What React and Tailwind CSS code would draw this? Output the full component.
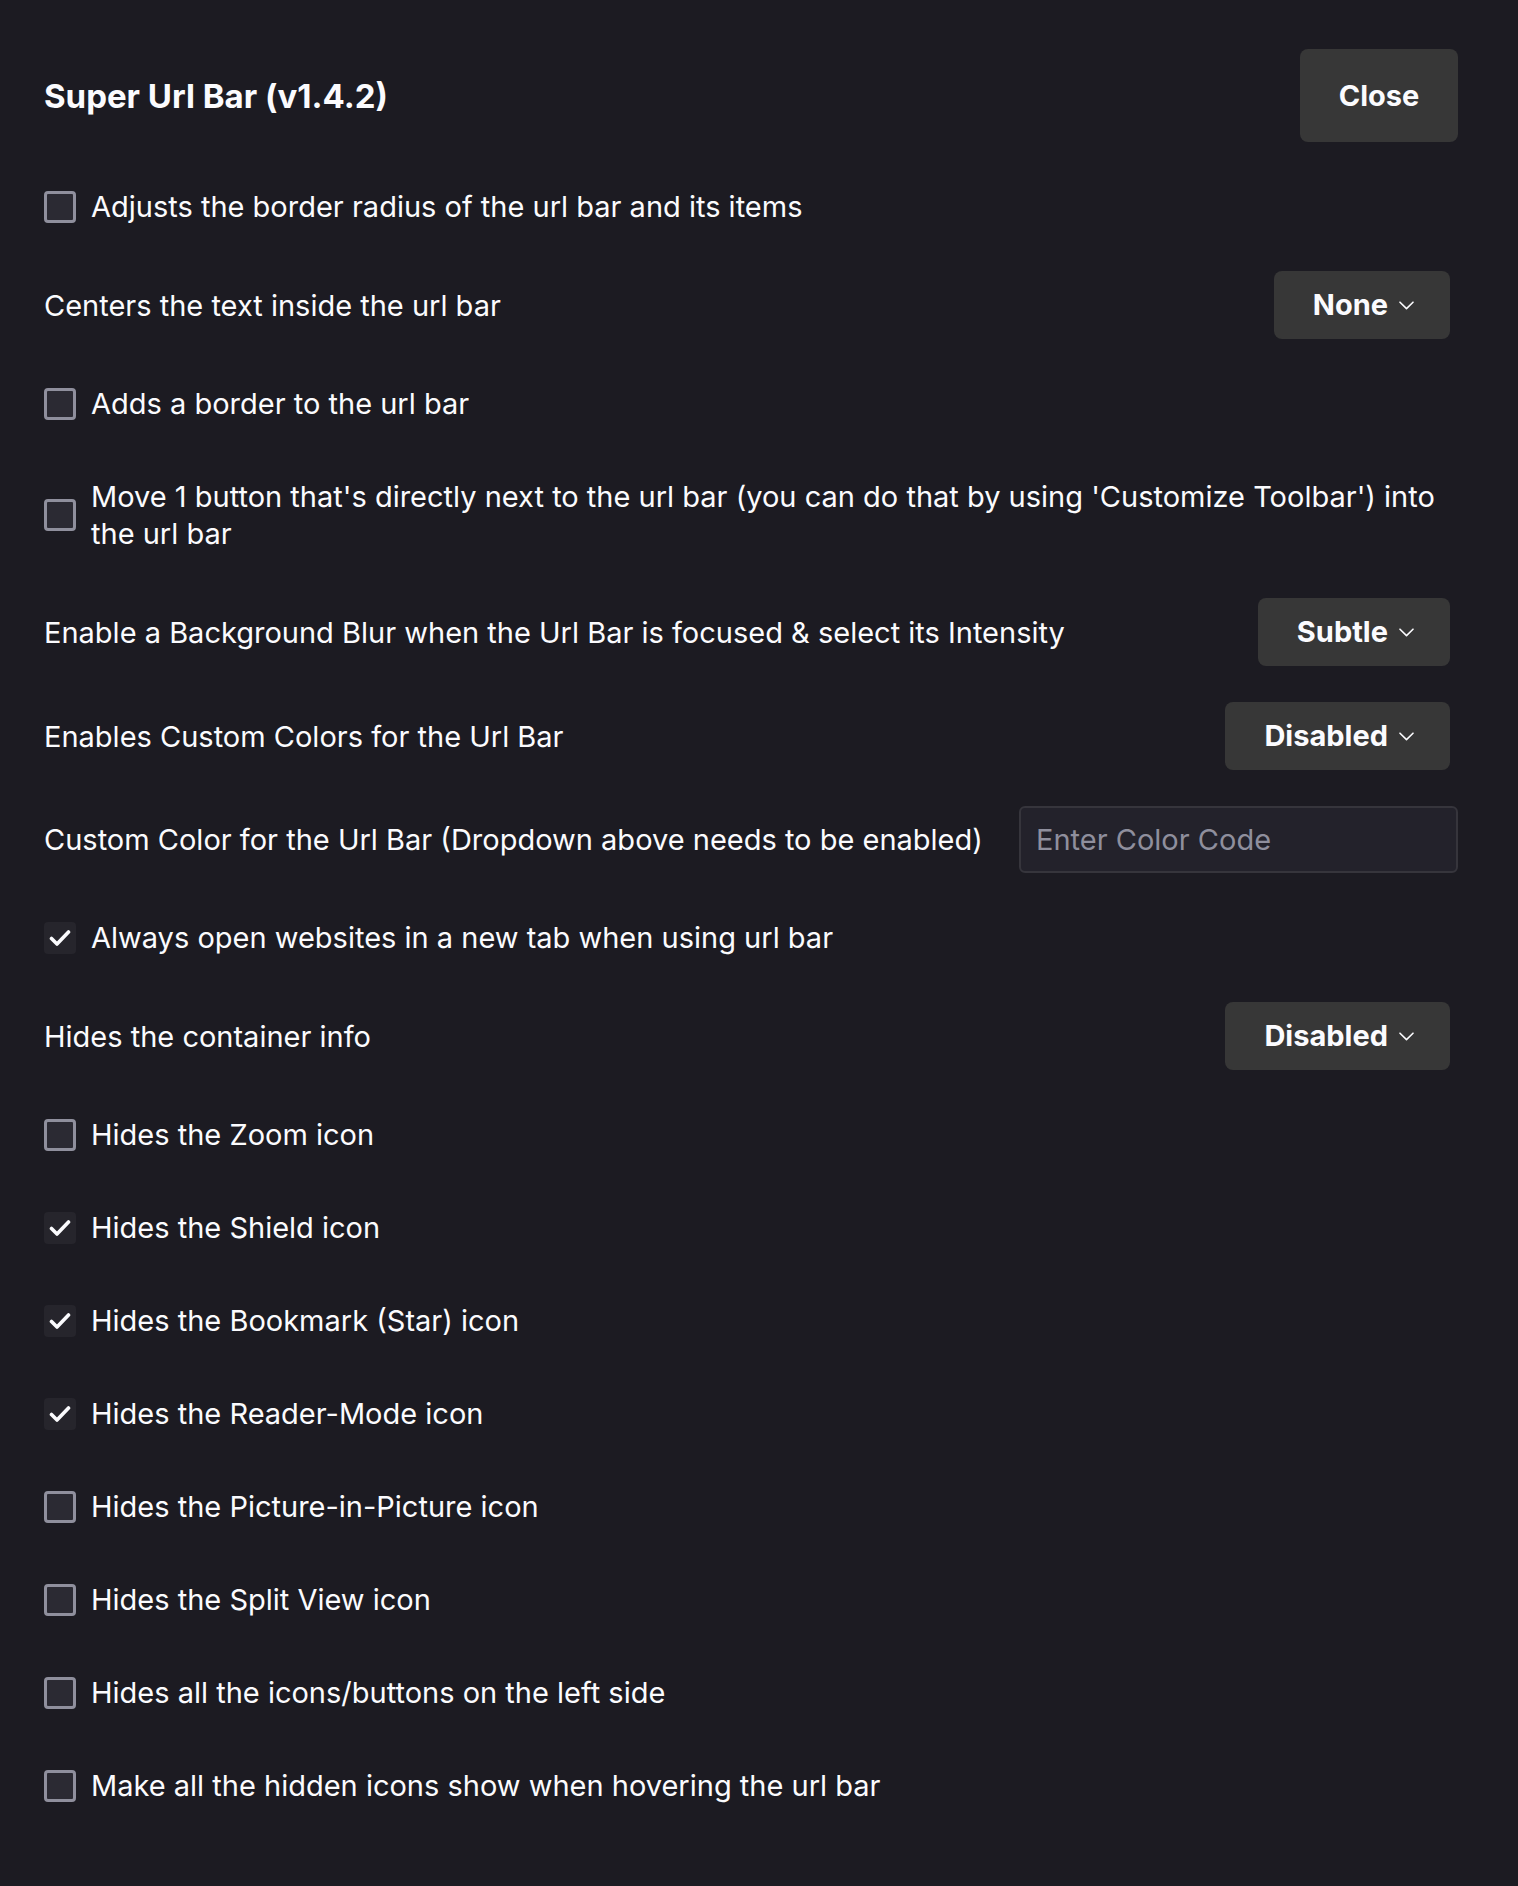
import React from "react";

const Chevron = () => (
  <svg width="15" height="9" viewBox="0 0 15 9" fill="none" className="ml-[11px]">
    <path d="M1 1.2 L7.5 7.6 L14 1.2" stroke="#fbfbfe" strokeWidth="1.6" strokeLinecap="round" strokeLinejoin="round" />
  </svg>
);

const Checkbox = ({ checked }) =>
  checked ? (
    <span className="flex h-[32px] w-[32px] shrink-0 items-center justify-center rounded-[4px] bg-[#26252c]">
      <svg width="22" height="18" viewBox="0 0 22 18" fill="none">
        <path d="M2.5 9.5 L8 15 L19.5 3" stroke="#fbfbfe" strokeWidth="3.6" strokeLinecap="round" strokeLinejoin="round" />
      </svg>
    </span>
  ) : (
    <span className="block h-[32px] w-[32px] shrink-0 rounded-[4px] border-[3px] border-[#8f8f9d] bg-[#2b2a33]" />
  );

const CheckRow = ({ label, checked }) => (
  <div className="flex items-center gap-[15px] py-[10px]">
    <Checkbox checked={checked} />
    <span className="leading-[37px]">{label}</span>
  </div>
);

const SelectRow = ({ label, value }) => (
  <div className="flex h-[68px] items-center justify-between">
    <span className="leading-[37px]">{label}</span>
    <button className="mr-[8px] flex h-[68px] items-center rounded-[8px] bg-[#373737] pl-[39px] pr-[36px] font-bold text-[#fbfbfe]">
      {value}
      <Chevron />
    </button>
  </div>
);

export default function App() {
  return (
    <div
      className="min-h-[1886px] bg-[#1c1b22] pl-[44px] pr-[60px] pt-[49px] pb-[70px] text-[29px] text-[#fbfbfe]"
      style={{ fontFamily: "Inter, 'Noto Sans', sans-serif" }}
    >
      <div className="flex flex-col gap-[36px]">
        <div className="flex items-center justify-between">
          <h1 className="text-[33px] font-bold leading-[42px]">Super Url Bar (v1.4.2)</h1>
          <button className="flex h-[93px] w-[158px] items-center justify-center rounded-[8px] bg-[#373737] font-bold">
            Close
          </button>
        </div>

        <CheckRow label="Adjusts the border radius of the url bar and its items" />
        <SelectRow label="Centers the text inside the url bar" value="None" />
        <CheckRow label="Adds a border to the url bar" />
        <CheckRow label="Move 1 button that's directly next to the url bar (you can do that by using 'Customize Toolbar') into the url bar" />
        <SelectRow label="Enable a Background Blur when the Url Bar is focused & select its Intensity" value="Subtle" />
        <SelectRow label="Enables Custom Colors for the Url Bar" value="Disabled" />

        <div className="flex h-[67px] items-center justify-between">
          <span className="leading-[37px]">Custom Color for the Url Bar (Dropdown above needs to be enabled)</span>
          <input
            type="text"
            placeholder="Enter Color Code"
            className="h-[67px] w-[439px] rounded-[6px] border-2 border-[#36353c] bg-[#23222b] px-[15px] text-[29px] text-[#fbfbfe] outline-none placeholder:text-[#8f8f9d]"
          />
        </div>

        <CheckRow label="Always open websites in a new tab when using url bar" checked />
        <SelectRow label="Hides the container info" value="Disabled" />
        <CheckRow label="Hides the Zoom icon" />
        <CheckRow label="Hides the Shield icon" checked />
        <CheckRow label="Hides the Bookmark (Star) icon" checked />
        <CheckRow label="Hides the Reader-Mode icon" checked />
        <CheckRow label="Hides the Picture-in-Picture icon" />
        <CheckRow label="Hides the Split View icon" />
        <CheckRow label="Hides all the icons/buttons on the left side" />
        <CheckRow label="Make all the hidden icons show when hovering the url bar" />
      </div>
    </div>
  );
}
